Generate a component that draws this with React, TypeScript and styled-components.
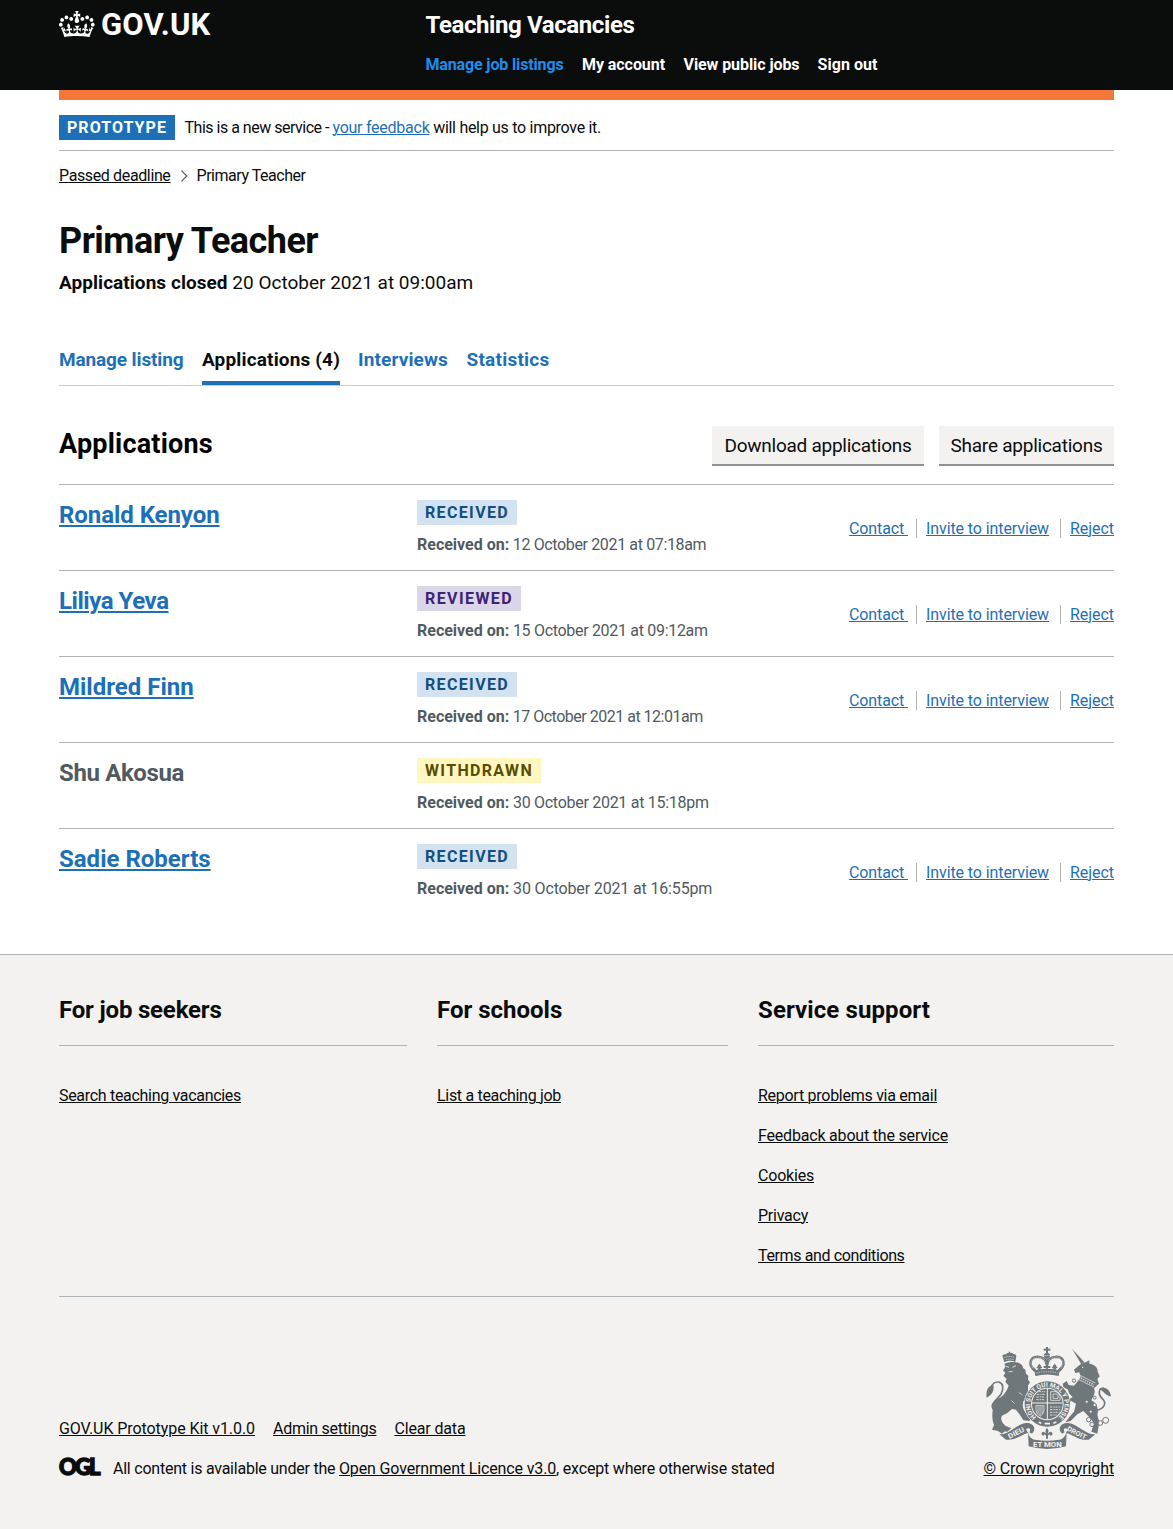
import React from "react";
import styled, { createGlobalStyle, css } from "styled-components";

const color = {
  ink: "#0b0c0c",
  link: "#1d70b8",
  muted: "#505a5f",
  line: "#b1b4b6",
  panel: "#f3f2f1",
  brand: "#f47738",
  crest: "#6f777b",
};

const GlobalStyle = createGlobalStyle`
  *, *::before, *::after { box-sizing: border-box; }
  body {
    margin: 0;
    background: #fff;
    color: ${color.ink};
    font-family: Roboto, "Liberation Sans", sans-serif;
    font-size: 16px;
    line-height: 20px;
    -webkit-font-smoothing: antialiased;
  }
  h1, h2, p, ul { margin: 0; padding: 0; }
  ul { list-style: none; }
`;

const Container = styled.div`
  margin: 0 59px;
`;

const Tracked = styled.span<{ $ls?: number }>`
  letter-spacing: ${(p) => p.$ls ?? 0}px;
  white-space: pre;
`;

const linkStyle = css`
  text-decoration: underline;
  text-decoration-thickness: 1px;
  text-underline-offset: 1px;
  text-decoration-skip-ink: auto;
`;

const Link = styled.a<{ $ls?: number; $dark?: boolean }>`
  ${linkStyle}
  color: ${(p) => (p.$dark ? color.ink : color.link)};
  letter-spacing: ${(p) => p.$ls ?? 0}px;
  white-space: pre;
  cursor: pointer;
`;

/* ---------- Header ---------- */

const Header = styled.header`
  height: 90px;
  background: ${color.ink};
  color: #fff;
`;

const HeaderGrid = styled(Container)`
  display: grid;
  grid-template-columns: 366.5px 1fr;
`;

const Brand = styled.a`
  display: flex;
  align-items: flex-start;
  gap: 6px;
  padding-top: 7px;
`;

const Wordmark = styled.span`
  font-size: 31px;
  line-height: 36px;
  font-weight: 700;
  letter-spacing: 0.2px;
`;

const ServiceName = styled.div`
  padding-top: 10px;
  font-size: 24px;
  line-height: 30px;
  font-weight: 700;
  letter-spacing: -0.39px;
`;

const HeaderNav = styled.nav`
  display: flex;
  gap: 18px;
  padding-top: 15px;
  font-weight: 700;
`;

const HeaderLink = styled.a<{ $active?: boolean; $ls: number; $w: number }>`
  width: ${(p) => p.$w}px;
  color: ${(p) => (p.$active ? "#1d8feb" : "#fff")};
  letter-spacing: ${(p) => p.$ls}px;
  white-space: nowrap;
`;

const BrandBar = styled.div`
  height: 10px;
  background: ${color.brand};
`;

/* ---------- Banner, breadcrumbs, title ---------- */

const PhaseBanner = styled.div`
  display: flex;
  gap: 9.5px;
  height: 51px;
  padding-top: 15px;
  border-bottom: 1px solid ${color.line};
`;

const BannerText = styled.p`
  padding-top: 3px;
`;

const tagTones = {
  phase: ["#1d70b8", "#ffffff"],
  blue: ["#d2e2f1", "#144e81"],
  purple: ["#dbd5e9", "#3d2375"],
  yellow: ["#fff7bf", "#594d00"],
};

type Tone = keyof typeof tagTones;

const Tag = styled.strong<{ $tone: Tone; $ls: number; $w: number }>`
  display: inline-block;
  width: ${(p) => p.$w}px;
  height: 25px;
  padding: 0 8px;
  background: ${(p) => tagTones[p.$tone][0]};
  color: ${(p) => tagTones[p.$tone][1]};
  font-weight: 700;
  line-height: 25px;
  letter-spacing: ${(p) => p.$ls}px;
  text-transform: uppercase;
  white-space: nowrap;
`;

const Breadcrumbs = styled.nav`
  display: flex;
  align-items: center;
  height: 20px;
  margin-top: 15px;
`;

const Chevron = styled.svg`
  margin: 0 9px;
`;

const Title = styled.h1`
  margin-top: 34px;
  font-size: 36px;
  line-height: 42px;
  letter-spacing: -0.53px;
`;

const Closing = styled.p`
  margin-top: 8px;
  font-size: 19px;
  line-height: 25px;
`;

/* ---------- Tabs ---------- */

const Tabs = styled.nav`
  display: flex;
  gap: 18px;
  height: 40px;
  margin-top: 51px;
  border-bottom: 1px solid #c9cccd;
`;

const Tab = styled.a<{ $active?: boolean; $ls: number; $w: number }>`
  width: ${(p) => p.$w}px;
  height: 39px;
  color: ${(p) => (p.$active ? color.ink : color.link)};
  border-bottom: ${(p) => (p.$active ? `4px solid ${color.link}` : "0")};
  font-size: 19px;
  font-weight: 700;
  line-height: 28px;
  letter-spacing: ${(p) => p.$ls}px;
  white-space: nowrap;
`;

/* ---------- Applications ---------- */

const SectionHead = styled.div`
  display: flex;
  justify-content: space-between;
  margin-top: 40px;
  height: 58px;
`;

const SectionTitle = styled.h2`
  color: #000;
  font-size: 27px;
  line-height: 36px;
  letter-spacing: 0.2px;
`;

const ButtonGroup = styled.div`
  display: flex;
  gap: 15px;
`;

const Button = styled.button<{ $ls: number; $w: number }>`
  width: ${(p) => p.$w}px;
  height: 40px;
  padding: 2px 0 0;
  border: 0;
  border-bottom: 2px solid #929191;
  background: ${color.panel};
  color: ${color.ink};
  font-family: inherit;
  font-size: 19px;
  line-height: 36px;
  letter-spacing: ${(p) => p.$ls}px;
  white-space: nowrap;
`;

const Row = styled.li`
  display: grid;
  grid-template-columns: 358px 1fr auto;
  height: 86px;
  padding-top: 15px;
  border-top: 1px solid ${color.line};
`;

const Name = styled.p<{ $ls: number; $inactive?: boolean }>`
  font-size: 24px;
  font-weight: 700;
  line-height: 30px;
  letter-spacing: ${(p) => p.$ls}px;
  ${(p) =>
    p.$inactive
      ? css`
          color: ${color.muted};
        `
      : css`
          ${linkStyle}
          display: inline-block;
          color: ${color.link};
          text-decoration-thickness: 2px;
          text-underline-offset: 2px;
        `}
`;

const Received = styled.p`
  margin-top: 10px;
  color: ${color.muted};
`;

const Actions = styled.ul`
  display: flex;
  align-items: flex-start;
  padding-top: 19px;
`;

const Action = styled.li<{ $w: number }>`
  width: ${(p) => p.$w}px;
  height: 19px;
  line-height: 19px;
  & + & {
    padding-left: 9px;
    border-left: 1px solid ${color.line};
  }
`;

/* ---------- Footer ---------- */

const Footer = styled.footer`
  height: 575px;
  margin-top: 40px;
  border-top: 1px solid ${color.line};
  background: ${color.panel};
`;

const FooterColumns = styled.div`
  display: grid;
  grid-template-columns: 348px 291px 356px;
  gap: 30px;
  height: 342px;
  padding-top: 40px;
  border-bottom: 1px solid ${color.line};
`;

const FooterTitle = styled.h2<{ $ls: number }>`
  height: 51px;
  border-bottom: 1px solid ${color.line};
  font-size: 24px;
  line-height: 30px;
  letter-spacing: ${(p) => p.$ls}px;
`;

const FooterList = styled.ul`
  display: flex;
  flex-direction: column;
  gap: 20px;
  padding-top: 40px;
`;

const Meta = styled.div`
  display: flex;
  justify-content: space-between;
  align-items: flex-end;
  height: 182px;
`;

const MetaLinks = styled.div`
  display: flex;
  gap: 18px;
`;

const Licence = styled.div`
  display: flex;
  align-items: center;
  margin-top: 20px;
  height: 20px;
`;

const OglMark = styled.span`
  width: 54px;
  margin-top: -4px;
  font-family: Lato, Inter, sans-serif;
  font-size: 22px;
  font-weight: 900;
  letter-spacing: -1.9px;
  -webkit-text-stroke: 1.4px ${color.ink};
`;

const Copyright = styled.div`
  display: flex;
  flex-direction: column;
  align-items: flex-end;
  gap: 10px;
  width: 131px;
`;

const CrestSvg = styled.svg`
  display: block;
  margin-right: 3px;
`;

const Crown = () => (
  <svg width="36" height="32" viewBox="0 0 36 32" fill="currentColor" aria-hidden="true">
    <path d="M6.7 12.2c1 .4 2.1-.1 2.5-1s-.1-2.1-1-2.5c-1-.4-2.1.1-2.5 1-.4 1 0 2.1 1 2.5m-4.3 2.5c1 .4 2.1-.1 2.5-1s-.1-2.1-1-2.5c-1-.4-2.1.1-2.5 1-.5 1 0 2.1 1 2.5m-1.3 4.8c1 .4 2.1-.1 2.5-1 .4-1-.1-2.1-1-2.5-1-.4-2.1.1-2.5 1-.4 1 0 2.1 1 2.5m10.4-5.8c1 .4 2.1-.1 2.5-1s-.1-2.1-1-2.5c-1-.4-2.1.1-2.5 1s0 2.1 1 2.5m17.4-1.5c-1 .4-2.1-.1-2.5-1s.1-2.1 1-2.5c1-.4 2.1.1 2.5 1 .5 1 0 2.1-1 2.5m4.3 2.5c-1 .4-2.1-.1-2.5-1s.1-2.1 1-2.5c1-.4 2.1.1 2.5 1 .5 1 0 2.1-1 2.5m1.3 4.8c-1 .4-2.1-.1-2.5-1-.4-1 .1-2.1 1-2.5 1-.4 2.1.1 2.5 1 .4 1 0 2.1-1 2.5m-10.4-5.8c-1 .4-2.1-.1-2.5-1s.1-2.1 1-2.5c1-.4 2.1.1 2.5 1s0 2.1-1 2.5m-5.3-4.9 2.4 1.3V6.5l-2.4.8c-.1-.1-.1-.2-.2-.2s1-3 1-3h-3.4l1 3c-.1.1-.2.1-.2.2-.1.1-2.4-.7-2.4-.7v3.5L17 8.8c.1.1.1.2.2.3l-1.4 4.2c-.1.2-.1.4-.1.6 0 1.1.8 2 1.9 2.2h.7c1-.2 1.9-1.1 1.9-2.1 0-.2 0-.4-.1-.6l-1.4-4.2c-.1-.2 0-.3.1-.4m-1 20.3c4.6 0 8.9.3 12.8.9 1.1-4.6 2.4-7.2 3.8-9.1l-2.6-.9c.3 1.3.3 1.9 0 2.8-.4-.4-.8-1.2-1.1-2.4l-1.2 4.2c.8-.5 1.4-.9 2-.9-1.2 2.6-2.7 3.2-3.6 3-1.2-.2-1.7-1.3-1.5-2.2.3-1.3 1.6-1.6 2.2-.1 1.2-2.4-.8-3.1-2.1-2.4 2-1.9 2.2-3.6.6-5.7-2.2 1.7-2.2 3.3-1.2 5.6-1.3-1.5-3.3-.7-2.5 1.8.9-1.4 2.1-.5 1.9.8-.2 1.2-1.7 2.2-3.7 2-2.8-.2-3-2.2-3-3.7.7-.1 1.9.5 3 2l.4-4.4c-1.1 1.1-2.1 1.4-3.2 1.4.4-1.2 2.1-3 2.1-3h-5.4s1.7 1.9 2.1 3c-1.1 0-2.1-.2-3.2-1.4l.4 4.4c1.1-1.5 2.3-2.1 3-2-.1 1.6-.2 3.5-3 3.7-1.9.2-3.5-.8-3.7-2-.2-1.3 1-2.2 1.9-.8.7-2.5-1.2-3.3-2.5-1.8 1-2.3 1-3.9-1.2-5.6-1.6 2-1.4 3.8.6 5.7-1.3-.7-3.3 0-2.1 2.4.6-1.5 1.9-1.1 2.2.1.2.9-.4 1.9-1.5 2.2-1 .2-2.4-.5-3.6-3 .6 0 1.2.3 2 .9l-1.2-4.2c-.3 1.1-.7 1.9-1.1 2.4-.3-.8-.2-1.4 0-2.8l-2.6.9C2.9 22.9 4.2 25.5 5.3 30c3.8-.5 8.2-.9 12.7-.9" />
  </svg>
);

const Crest = () => {
  const c = color.crest;
  const bg = color.panel;
  return (
    <CrestSvg width="125" height="102" viewBox="48 36 375 306" fill={c} aria-hidden="true">
      <defs>
        <path id="garter" d="M199.500 247.200 A51.700 51.700 0 1 1 264.500 247.200" />
      </defs>
      {/* lion with its crown and tail */}
      <path d="M103 82 L97 62 Q100 56 108 58 Q112 52 117 54 L116 50 h5 L120 54 Q126 52 130 57 Q138 56 139 63 L136 81 C126 76 113 76 103 82Z" />
      <path d="M103 68 Q118 61 135 68 M108 74 Q119 70 131 74" stroke={bg} strokeWidth="2" strokeDasharray="4 2.500" fill="none" />
      <path d="M104 86 C112 81 136 79 147 84 L156 90 L160 100 L166 104 L168 116 L175 122 L174 134 L180 142 L174 152 L174 168 L186 180 L176 192 L160 198 L158 212 C160 225 165 232 174 240 L188 250 L178 258 L160 256 L150 240 L138 224 L126 222 L112 234 L96 242 C90 252 96 264 106 272 L124 280 L112 290 L92 288 L76 276 C66 262 66 245 68 226 C64 210 72 196 86 190 C100 184 110 168 116 152 L106 140 L110 132 L100 122 L106 114 L99 106 L105 98 Z" />
      <path d="M106 93 L117 97 M127 97 L138 92 M116 110 L128 110" stroke={bg} strokeWidth="2.500" fill="none" />
      <path d="M134 206 L124 196 M158 180 L146 172" stroke={bg} strokeWidth="2" fill="none" />
      <path d="M70 222 C58 206 82 194 93 178 C102 160 100 144 86 141 C74 140 66 148 64 158" stroke={c} strokeWidth="5" fill="none" />
      <path d="M70 150 C54 152 47 166 50 188 C64 182 74 168 70 150Z" />
      <path d="M72 270 L66 284 L84 288 L96 296 L108 284Z" />
      {/* unicorn with its horn, tail and chain */}
      <path d="M306 41 L343 82 L334 88Z" />
      <path d="M334 86 L350 80 L358 76 L358 86 C374 88 384 98 383 110 L389 124 L382 132 L387 146 L372 160 C378 172 370 184 364 196 C378 204 388 220 382 240 L388 262 L382 296 L364 290 L372 264 L354 242 L340 228 L322 238 L302 258 L286 262 L298 246 L312 230 L318 206 L304 198 L296 206 L292 196 L308 186 L298 176 L294 164 L280 156 L278 146 L290 138 L296 150 L312 152 L322 140 L332 126 L328 112 L316 114 L312 104 L324 94Z" />
      <path d="M322 132 L372 156 M328 120 L376 144" stroke={bg} strokeWidth="2" fill="none" />
      <path d="M327 127 L372 149" stroke={bg} strokeWidth="5" strokeDasharray="3 4" fill="none" />
      <circle cx="338" cy="97" r="2" fill={bg} />
      <path d="M380 226 C400 222 412 206 398 192 C382 178 386 158 402 160" stroke={c} strokeWidth="5" fill="none" />
      <path d="M388 162 C406 152 420 164 423 184 C410 184 402 170 388 162Z" />
      <g fill={bg} stroke={c} strokeWidth="3">
        <circle cx="312" cy="137" r="5" />
        <circle cx="350" cy="200" r="4.500" />
        <circle cx="374" cy="188" r="4.500" />
        <circle cx="374" cy="210" r="5" />
        <circle cx="362" cy="230" r="4.500" />
        <circle cx="356" cy="254" r="6.500" />
        <circle cx="366" cy="268" r="6.500" />
        <circle cx="391" cy="264" r="7" />
        <circle cx="407" cy="256" r="9" />
      </g>
      {/* imperial crown */}
      <rect x="228" y="36" width="6" height="20" />
      <rect x="221" y="41" width="20" height="6" />
      <circle cx="231" cy="62" r="9" />
      <path d="M223 62 H239" stroke={bg} strokeWidth="1.500" />
      <path d="M196 108 C174 92 178 66 202 65 C220 65 230 74 231 92 C232 74 242 65 260 65 C284 66 288 92 266 108" stroke={c} strokeWidth="7.500" fill="none" />
      <path d="M196 106 C176 92 180 67 202 66 C218 66 229 74 231 90 C233 74 244 66 260 66 C282 67 286 92 266 106" stroke={bg} strokeWidth="2" strokeDasharray="2.200 3" fill="none" />
      <path d="M231 70 V108" stroke={c} strokeWidth="5" />
      <path d="M193 106 Q231 97 269 106 L266 123 Q231 114 196 123Z" />
      <path d="M208 86 l5 6 -2 14 h-6 l-2 -14z M254 86 l5 6 -2 14 h-6 l-2 -14z M200 95 h16 v5 h-16z M246 95 h16 v5 h-16z M221 93 h20 v6 h-20z M190 94 l10 14 h-8z M272 94 l-10 14 h8z" />
      <path d="M199 114 Q231 106 263 114" stroke={bg} strokeWidth="2" strokeDasharray="4 3" fill="none" />
      {/* garter and shield */}
      <circle cx="232" cy="207" r="70" fill={bg} />
      <circle cx="232" cy="207" r="68" />
      <circle cx="232" cy="207" r="49" fill={bg} />
      <circle cx="232" cy="207" r="46" />
      <g stroke={bg} fill="none">
        <path d="M232 161 V253 M186 204 H278" strokeWidth="3" />
        <path d="M201 178 h24 M199 186 h26 M199 194 h26 M206 170 h19 M240 224 h32 M240 216 h34 M240 232 h28 M240 240 h20" strokeWidth="2.500" strokeDasharray="7 3 4 2" />
        <path d="M242 170 h16 q10 6 12 14 v12 h-28z M249 177 h11 l4 6 v7 h-15z" strokeWidth="2.200" />
        <path d="M198 212 h24 v16 q-4 12 -12 16 q-12 -8 -12 -20z M204 214 v22 M210 214 v28 M216 214 v22" strokeWidth="2.200" />
      </g>
      <text fill={bg} fontFamily="Roboto, sans-serif" fontSize="19" fontWeight="700">
        <textPath href="#garter" startOffset="1" textLength="252" lengthAdjust="spacingAndGlyphs">
          HONI SOIT QUI MAL Y PENSE
        </textPath>
      </text>
      <path d="M206 262 l8 3 M224 266 h16 M250 265 l9 -4" stroke={bg} strokeWidth="5" />
      {/* motto ribbon and fleur-de-lis */}
      <path d="M88 298 C116 300 138 268 168 264 C188 262 202 280 186 296 L178 292 C184 282 178 276 168 282 L174 294 C150 300 136 318 108 314Z" />
      <path d="M376 298 C346 300 326 268 294 264 C274 262 260 280 276 296 L284 292 C278 282 284 276 294 282 L288 294 C312 300 326 318 356 314Z" />
      <path d="M174 290 Q178 312 196 314 Q231 320 266 314 Q284 312 290 290 L288 334 Q231 350 176 334Z" />
      <path d="M176 296 Q182 313 198 314 M286 296 Q280 313 266 314" stroke={bg} strokeWidth="1.500" fill="none" />
      <path d="M231 279 q7 8 3 17 q8 -10 13 -2 q2 8 -7 8 q3 -6 -6 -1 v10 h-6 v-10 q-9 -5 -6 1 q-9 0 -7 -8 q5 -8 13 2 q-4 -9 3 -17z" />
      <g fill={bg} fontFamily="Roboto, sans-serif" fontWeight="700" textAnchor="middle">
        <text fontSize="21" textLength="52" lengthAdjust="spacingAndGlyphs" transform="translate(142 300) rotate(-27)">DIEU</text>
        <text fontSize="22" textLength="86" lengthAdjust="spacingAndGlyphs" x="232" y="337">ET MON</text>
        <text fontSize="21" textLength="62" lengthAdjust="spacingAndGlyphs" transform="translate(317 300) rotate(27)">DROIT</text>
      </g>
    </CrestSvg>
  );
};

type Application = {
  name: string;
  nameLs: number;
  tag: string;
  tone: Tone;
  tagLs: number;
  tagWidth: number;
  date: string;
  dateLs: number;
  withdrawn?: boolean;
};

const applications: Application[] = [
  { name: "Ronald Kenyon", nameLs: -0.06, tag: "Received", tone: "blue", tagLs: 1.35, tagWidth: 100, date: "12 October 2021 at 07:18am", dateLs: -0.363 },
  { name: "Liliya Yeva", nameLs: -0.45, tag: "Reviewed", tone: "purple", tagLs: 1.4, tagWidth: 104, date: "15 October 2021 at 09:12am", dateLs: -0.307 },
  { name: "Mildred Finn", nameLs: 0, tag: "Received", tone: "blue", tagLs: 1.35, tagWidth: 100, date: "17 October 2021 at 12:01am", dateLs: -0.492 },
  { name: "Shu Akosua", nameLs: -0.37, tag: "Withdrawn", tone: "yellow", tagLs: 1.34, tagWidth: 124, date: "30 October 2021 at 15:18pm", dateLs: -0.281, withdrawn: true },
  { name: "Sadie Roberts", nameLs: 0, tag: "Received", tone: "blue", tagLs: 1.35, tagWidth: 100, date: "30 October 2021 at 16:55pm", dateLs: -0.151 },
];

const footerColumns = [
  { title: "For job seekers", ls: -0.19, links: [["Search teaching vacancies", -0.307]] },
  { title: "For schools", ls: 0, links: [["List a teaching job", -0.309]] },
  {
    title: "Service support",
    ls: 0.1,
    links: [
      ["Report problems via email", -0.271],
      ["Feedback about the service", -0.191],
      ["Cookies", -0.2],
      ["Privacy", -0.24],
      ["Terms and conditions", -0.378],
    ],
  },
] as { title: string; ls: number; links: [string, number][] }[];

export default function App() {
  return (
    <>
      <GlobalStyle />
      <Header>
        <HeaderGrid>
          <Brand>
            <Crown />
            <Wordmark>GOV.UK</Wordmark>
          </Brand>
          <div>
            <ServiceName>Teaching Vacancies</ServiceName>
            <HeaderNav>
              <HeaderLink $active $w={138.5} $ls={-0.142}>Manage job listings</HeaderLink>
              <HeaderLink $w={83.5} $ls={-0.066}>My account</HeaderLink>
              <HeaderLink $w={116} $ls={-0.076}>View public jobs</HeaderLink>
              <HeaderLink $w={60} $ls={0.053}>Sign out</HeaderLink>
            </HeaderNav>
          </div>
        </HeaderGrid>
      </Header>

      <Container>
        <BrandBar />
        <PhaseBanner>
          <Tag $tone="phase" $w={116} $ls={1.05}>Prototype</Tag>
          <BannerText>
            <Tracked $ls={-0.49}>{"This is a new service - "}</Tracked>
            <Link $ls={-0.256}>your feedback</Link>
            <Tracked $ls={-0.29}>{" will help us to improve it."}</Tracked>
          </BannerText>
        </PhaseBanner>

        <Breadcrumbs>
          <Link $dark $ls={-0.37}>Passed deadline</Link>
          <Chevron width="8" height="12" viewBox="0 0 8 12" fill="none" stroke={color.muted} strokeWidth="1.200">
            <path d="M1.500 .7 6.800 6 1.500 11.300" />
          </Chevron>
          <Tracked $ls={-0.466}>Primary Teacher</Tracked>
        </Breadcrumbs>

        <Title>Primary Teacher</Title>
        <Closing>
          <Tracked as="strong" $ls={0.05}>Applications closed</Tracked>
          <Tracked>{" 20 October 2021 at 09:00am"}</Tracked>
        </Closing>

        <Tabs>
          <Tab $w={125} $ls={-0.125}>Manage listing</Tab>
          <Tab $active $w={138} $ls={0.156}>Applications (4)</Tab>
          <Tab $w={90.5} $ls={0.134}>Interviews</Tab>
          <Tab $w={83} $ls={0.236}>Statistics</Tab>
        </Tabs>

        <SectionHead>
          <SectionTitle>Applications</SectionTitle>
          <ButtonGroup>
            <Button $w={212} $ls={-0.26}>Download applications</Button>
            <Button $w={175} $ls={-0.239}>Share applications</Button>
          </ButtonGroup>
        </SectionHead>

        <ul>
          {applications.map((a) => (
            <Row key={a.name}>
              <div>
                <Name $ls={a.nameLs} $inactive={a.withdrawn}>{a.name}</Name>
              </div>
              <div>
                <Tag $tone={a.tone} $ls={a.tagLs} $w={a.tagWidth}>{a.tag}</Tag>
                <Received>
                  <strong>Received on:</strong>
                  <Tracked $ls={a.dateLs}>{` ${a.date}`}</Tracked>
                </Received>
              </div>
              {!a.withdrawn && (
                <Actions>
                  <Action $w={67}><Link $ls={-0.111}>{"Contact "}</Link></Action>
                  <Action $w={144}><Link $ls={-0.097}>Invite to interview</Link></Action>
                  <Action $w={54}><Link $ls={-0.044}>Reject</Link></Action>
                </Actions>
              )}
            </Row>
          ))}
        </ul>
      </Container>

      <Footer>
        <Container>
          <FooterColumns>
            {footerColumns.map((col) => (
              <div key={col.title}>
                <FooterTitle $ls={col.ls}>{col.title}</FooterTitle>
                <FooterList>
                  {col.links.map(([label, ls]) => (
                    <li key={label}>
                      <Link $dark $ls={ls}>{label}</Link>
                    </li>
                  ))}
                </FooterList>
              </div>
            ))}
          </FooterColumns>
          <Meta>
            <div>
              <MetaLinks>
                <Link $dark $ls={-0.074}>GOV.UK Prototype Kit v1.0.0</Link>
                <Link $dark $ls={-0.28}>Admin settings</Link>
                <Link $dark $ls={-0.155}>Clear data</Link>
              </MetaLinks>
              <Licence>
                <OglMark>OGL</OglMark>
                <span>
                  <Tracked $ls={-0.234}>{"All content is available under the "}</Tracked>
                  <Link $dark $ls={-0.145}>Open Government Licence v3.0</Link>
                  <Tracked $ls={-0.185}>, except where otherwise stated</Tracked>
                </span>
              </Licence>
            </div>
            <Copyright>
              <Crest />
              <Link $dark $ls={-0.117}>© Crown copyright</Link>
            </Copyright>
          </Meta>
        </Container>
      </Footer>
    </>
  );
}
